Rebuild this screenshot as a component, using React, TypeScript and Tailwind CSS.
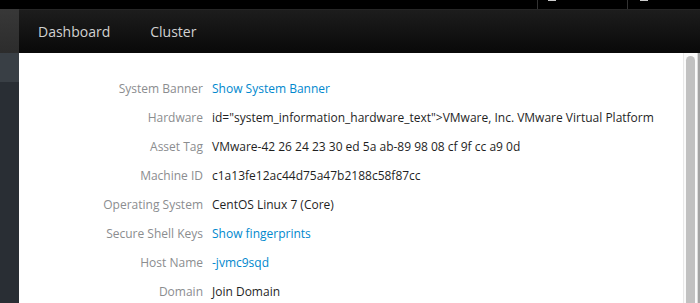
import React from "react";

interface Row { label: string; value: string; link?: boolean; }

const ROWS: Row[] = [
  { label: "System Banner", value: "Show System Banner", link: true },
  { label: "Hardware", value: 'id="system_information_hardware_text">VMware, Inc. VMware Virtual Platform' },
  { label: "Asset Tag", value: "VMware-42 26 24 23 30 ed 5a ab-89 98 08 cf 9f cc a9 0d" },
  { label: "Machine ID", value: "c1a13fe12ac44d75a47b2188c58f87cc" },
  { label: "Operating System", value: "CentOS Linux 7 (Core)" },
  { label: "Secure Shell Keys", value: "Show fingerprints", link: true },
  { label: "Host Name", value: "-jvmc9sqd", link: true },
  { label: "Domain", value: "Join Domain" },
];

export default function App() {
  return (
    <div className="w-[700px] h-[303px] overflow-hidden bg-black flex flex-col" style={{ fontFamily: '"Open Sans", "Noto Sans", sans-serif' }}>
      {/* top masthead, mostly scrolled off */}
      <div className="h-[9px] shrink-0 bg-black overflow-hidden flex justify-end">
        <div className="flex h-[9px] mr-[3px]">
          <div className="w-[90px] border-l border-[#333] relative">
            <span className="absolute left-[10px] top-[-6px] w-[8px] h-[7px] bg-[#ccc]" />
            <span className="absolute left-[34px] top-[-11px] text-[12px] leading-[12px] text-[#eee]">Unlocked</span>
          </div>
          <div className="w-[70px] border-l border-[#333] relative">
            <span className="absolute left-[12px] top-[-6px] w-[8px] h-[7px] bg-[#ccc]" />
            <span className="absolute left-[27px] top-[-11px] text-[12px] leading-[12px] text-[#eee]">Edit</span>
          </div>
        </div>
      </div>

      <div className="flex flex-1 min-h-0">
        {/* sidebar strip */}
        <div className="w-[19px] shrink-0 flex flex-col">
          <div className="h-[44px] bg-gradient-to-b from-[#383838] to-[#2c2c2c]" />
          <div className="h-[29px] bg-[#393f45]" />
          <div className="flex-1 bg-[#292e34]" />
        </div>

        <div className="flex-1 flex flex-col min-w-0">
          {/* nav */}
          <div className="h-[44px] shrink-0 bg-gradient-to-b from-[#1d1d1d] to-[#090909] border-t border-[#262626] flex items-center pl-[19px] gap-[40px] text-[14px] text-[#d1d1d1]">
            <span>Dashboard</span>
            <span>Cluster</span>
          </div>

          {/* content */}
          <div className="flex-1 flex bg-white min-h-0">
            <div className="flex-1 pt-[21px]">
              {ROWS.map(r => (
                <div key={r.label} className="flex items-center h-[29px] text-[12px]">
                  <div className="w-[184px] text-right text-[#8b8d8f] shrink-0">{r.label}</div>
                  <div className={`ml-[9px] whitespace-nowrap ${r.link ? "text-[#0088ce]" : "text-[#1f1f1f]"}`}>{r.value}</div>
                </div>
              ))}
            </div>
            {/* scrollbar */}
            <div className="w-[14px] shrink-0 bg-[#fafafa] border-l border-[#e8e8e8] pt-[3px] pl-[2px]">
              <div className="w-[9px] h-full bg-[#c1c1c1] rounded-t-full" />
            </div>
            <div className="w-[3px] shrink-0 bg-[#a3a3a3] border-l border-[#dcdcdc]" />
          </div>
        </div>
      </div>
    </div>
  );
}
